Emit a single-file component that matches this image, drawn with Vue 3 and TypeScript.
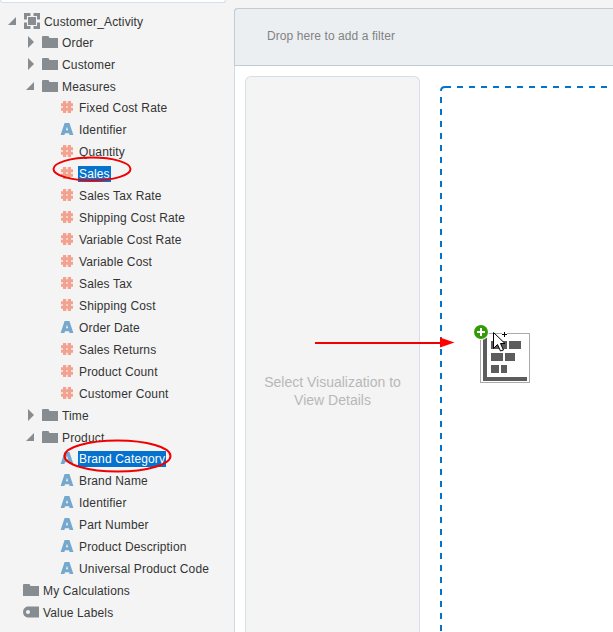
<script setup lang="ts">
type IconKind = 'subject' | 'folder' | 'measure' | 'attribute' | 'tag'

interface TreeRow {
  label: string
  icon: IconKind
  level: 'root' | 'branch' | 'leaf' | 'plain'
  expanded?: boolean
  selected?: boolean
}

const measure = (label: string, selected = false): TreeRow => ({ label, icon: 'measure', level: 'leaf', selected })
const attribute = (label: string, selected = false): TreeRow => ({ label, icon: 'attribute', level: 'leaf', selected })
const folder = (label: string, expanded = false): TreeRow => ({ label, icon: 'folder', level: 'branch', expanded })

const rows: TreeRow[] = [
  { label: 'Customer_Activity', icon: 'subject', level: 'root', expanded: true },
  folder('Order'),
  folder('Customer'),
  folder('Measures', true),
  measure('Fixed Cost Rate'),
  attribute('Identifier'),
  measure('Quantity'),
  measure('Sales', true),
  measure('Sales Tax Rate'),
  measure('Shipping Cost Rate'),
  measure('Variable Cost Rate'),
  measure('Variable Cost'),
  measure('Sales Tax'),
  measure('Shipping Cost'),
  attribute('Order Date'),
  measure('Sales Returns'),
  measure('Product Count'),
  measure('Customer Count'),
  folder('Time'),
  folder('Product', true),
  attribute('Brand Category', true),
  attribute('Brand Name'),
  attribute('Identifier'),
  attribute('Part Number'),
  attribute('Product Description'),
  attribute('Universal Product Code'),
  { label: 'My Calculations', icon: 'folder', level: 'plain' },
  { label: 'Value Labels', icon: 'tag', level: 'plain' },
]
</script>

<template>
  <div class="app">
    <aside class="sidebar">
      <div class="search"></div>
      <ul class="tree">
        <li v-for="(row, i) in rows" :key="i" class="row" :class="[row.level, { expanded: row.expanded }]">
          <svg v-if="row.level === 'root' || row.level === 'branch'" class="twisty" width="10" height="14" viewBox="0 0 10 14">
            <path v-if="row.expanded" d="M9 3V11H1Z" />
            <path v-else d="M3 1L9 7L3 13Z" />
          </svg>
          <svg v-if="row.icon === 'subject'" class="icon" width="16" height="16" viewBox="0 0 16 16">
            <path d="M4 4h8v8H4zM0 0h6.500v3H3V6.500H0zM9.500 0H16v6.500h-3V3H9.500zM0 9.500h3V13h3.500v3H0zM13 9.500h3V16H9.500v-3H13z" />
          </svg>
          <svg v-else-if="row.icon === 'folder'" class="icon" width="16" height="16" viewBox="0 0 16 16">
            <path d="M0 3q0-1 1-1h5.500l1 2H16v10H0z" />
          </svg>
          <svg v-else-if="row.icon === 'measure'" class="icon hash" width="12" height="16" viewBox="0 0 12 16">
            <path d="M2 2h3.200v2.200h1.600V2H10v2.200h2v3h-2v1.600h2v3h-2V14H6.800v-2.200H5.200V14H2v-2.200H0v-3h2V7.200H0v-3h2zM5.200 7.200v1.600h1.600V7.200z" fill-rule="evenodd" />
          </svg>
          <svg v-else-if="row.icon === 'attribute'" class="icon letter" width="14" height="16" viewBox="0 0 14 16">
            <path d="M4.600 2h4.800L13.400 14H9.600l-.600-1.800H5L4.400 14H.600zM7 5.800L5.900 9.300h2.200z" fill-rule="evenodd" />
          </svg>
          <svg v-else class="icon" width="16" height="16" viewBox="0 0 16 16">
            <path d="M4 2.500H16v11H4Q0 12 0 8T4 2.500zM5 6a2 2 0 1 0 0 4a2 2 0 1 0 0-4z" fill-rule="evenodd" />
          </svg>
          <span class="label" :class="{ selected: row.selected }">{{ row.label }}</span>
        </li>
      </ul>
    </aside>

    <main class="workspace">
      <header class="filters">Drop here to add a filter</header>
      <div class="body">
        <section class="details">
          <p>Select Visualization to<br />View Details</p>
        </section>
        <section class="canvas">
          <svg class="outline" width="173" height="546" viewBox="0 0 173 546">
            <path d="M1 5Q1 1 5 1H11" />
            <path d="M17 1H173M1 11V546" stroke-dasharray="6 6" />
          </svg>
        </section>
      </div>
    </main>

    <svg class="overlay" width="613" height="632" viewBox="0 0 613 632">
      <g class="annotation">
        <ellipse cx="92" cy="169" rx="38.500" ry="11.500" />
        <ellipse cx="117.500" cy="456" rx="53" ry="15.500" />
        <path d="M315 343H441" />
        <path class="head" d="M440 337.500L454.500 342.500L440 347.500Z" />
      </g>
      <g shape-rendering="crispEdges">
        <rect x="480.500" y="333.500" width="49" height="49" fill="#fff" stroke="#aaa" />
        <path class="chart" d="M483 336h4v41h40v4h-44zM491 341h16v8h-16zM509 341h12v8h-12zM491 353h12v8h-12zM505 353h10v8h-10zM491 365h8v8h-8zM501 365h6v8h-6z" />
      </g>
      <circle cx="481" cy="332" r="8" fill="#fff" />
      <circle cx="481" cy="332" r="7" fill="#339b08" />
      <path d="M477 332h8M481 328v8" stroke="#fff" stroke-width="2" />
      <rect x="502" y="332" width="5" height="5" fill="#fff" />
      <path d="M502 334.500h5M504.500 332v5" stroke="#000" />
      <path d="M493.500 332.500V348.500L497.500 344.500L500.500 351L503.500 350L500.500 343.500H505Z" fill="#fff" stroke="#000" />
    </svg>
  </div>
</template>

<style>
body {
  margin: 0;
}
</style>

<style scoped>
.app {
  position: relative;
  display: flex;
  width: 613px;
  height: 632px;
  overflow: hidden;
  background: #f4f4f4;
  font-family: 'Liberation Sans', Arial, sans-serif;
  font-size: 12px;
  color: #333;
}
.sidebar {
  width: 234px;
  flex: none;
}
.search {
  box-sizing: border-box;
  width: 226px;
  height: 3px;
  background: #fff;
  border: 1px solid #d6dfe6;
  border-top: 0;
  border-radius: 0 0 3px 3px;
}
.tree {
  list-style: none;
  margin: 0;
  padding: 7px 0 0;
}
.row {
  display: flex;
  align-items: center;
  height: 22px;
  white-space: nowrap;
}
.row.expanded {
  height: 21px;
}
.root {
  padding-left: 7px;
}
.branch {
  padding-left: 25px;
}
.leaf {
  padding-left: 61px;
}
.plain {
  padding-left: 23px;
}
.twisty {
  margin-right: 7px;
  fill: #878c91;
}
.icon {
  flex: none;
  fill: #878c91;
}
.hash {
  fill: #f3a28f;
}
.letter {
  margin: 0 -1px;
  fill: #75a8cd;
}
.label {
  margin-top: 2px;
  margin-left: 3px;
  padding: 0 1px;
  line-height: 16px;
  letter-spacing: 0.15px;
}
.leaf .label {
  margin-left: 5px;
}
.selected {
  background: #0572ce;
  color: #fff;
}
.workspace {
  box-sizing: border-box;
  flex: 1;
  display: flex;
  flex-direction: column;
  margin-top: 8px;
  border-left: 1px solid #d0dbe4;
  border-top-left-radius: 4px;
  background: #fff;
}
.filters {
  box-sizing: border-box;
  height: 58px;
  margin-left: -1px;
  padding-left: 32px;
  border: 1px solid #c0cbd3;
  border-right: 0;
  border-top-left-radius: 4px;
  background: #ebeff2;
  color: #828282;
  line-height: 54px;
  letter-spacing: 0.08px;
}
.body {
  flex: 1;
  display: flex;
  padding: 10px 0 0 10px;
}
.details {
  box-sizing: border-box;
  width: 175px;
  padding-top: 296px;
  border: 1px solid #d6dfe6;
  border-bottom: 0;
  border-radius: 6px 6px 0 0;
  background: #f4f4f4;
  color: #b8b8b8;
  font-size: 14px;
  line-height: 18px;
  text-align: center;
}
.details p {
  margin: 0;
}
.canvas {
  flex: 1;
  padding: 10px 0 0 20px;
}
.outline {
  display: block;
  fill: none;
  stroke: #0572ce;
  stroke-width: 2;
}
.overlay {
  position: absolute;
  inset: 0;
  pointer-events: none;
}
.annotation {
  fill: none;
  stroke: #f00000;
  stroke-width: 2;
}
.head {
  fill: #f00;
  stroke: none;
}
.chart {
  fill: #5c5c5c;
}
</style>
